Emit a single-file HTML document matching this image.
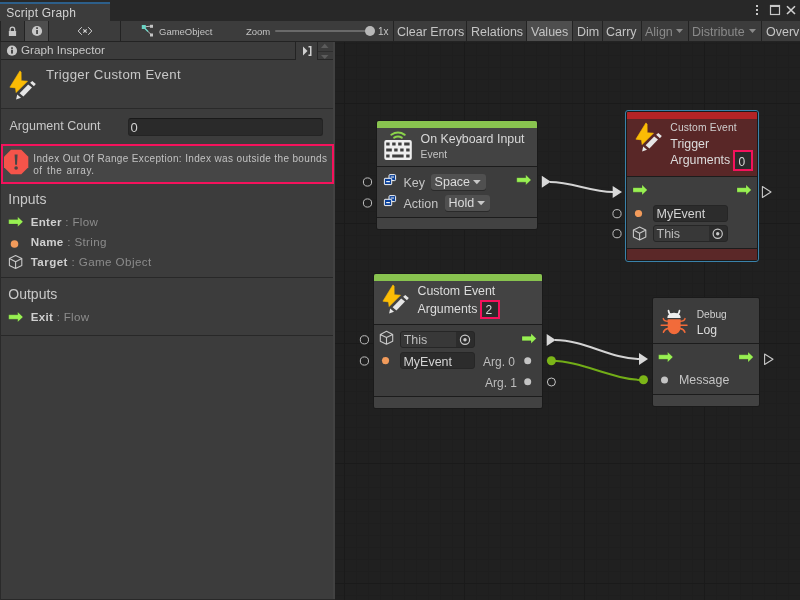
<!DOCTYPE html>
<html><head><meta charset="utf-8">
<style>
*{box-sizing:border-box}
html,body{margin:0;padding:0}
body{width:800px;height:600px;overflow:hidden;position:relative;will-change:transform;background:#202020;font-family:"Liberation Sans",sans-serif;color:#c4c4c4}
.a{position:absolute}
.t{position:absolute;white-space:nowrap;line-height:1}
svg{position:absolute;overflow:visible}
#grid{position:absolute;left:335px;top:42px;width:465px;height:558px;
 background-color:#202020;
 background-image:
  linear-gradient(to right,#1a1a1a 1px,transparent 1px),
  linear-gradient(to bottom,#1a1a1a 1px,transparent 1px),
  linear-gradient(to right,#1e1e1e 1px,transparent 1px),
  linear-gradient(to bottom,#1e1e1e 1px,transparent 1px);
 background-size:120px 120px,120px 120px,12px 12px,12px 12px;
 background-position:9px 61px,9px 61px,9px 61px,9px 61px}
.tb{position:absolute;top:21px;height:20px;background:#3c3c3c;border-right:1px solid #232323}
.tbt{position:absolute;top:26.2px;font-size:12.5px;color:#c4c4c4;white-space:nowrap;line-height:1}
.sep{position:absolute;background:#232323}
</style></head><body>
<div id="grid"></div>

<!-- tab strip -->
<div class="a" style="left:0;top:0;width:800px;height:21px;background:#282828"></div>
<div class="a" style="left:0;top:2px;width:110px;height:19px;background:#3c3c3c;border-top:2px solid #2d5f8a"></div>
<div class="t" style="left:6.3px;top:7px;font-size:12px;letter-spacing:0.2px;color:#d2d2d2">Script Graph</div>
<!-- window icons -->
<svg style="left:750px;top:0" width="50" height="21">
 <rect x="6" y="5" width="2" height="2" fill="#c8c8c8"/><rect x="6" y="9" width="2" height="2" fill="#c8c8c8"/><rect x="6" y="13" width="2" height="2" fill="#c8c8c8"/>
 <rect x="20.5" y="5.5" width="9" height="9" fill="none" stroke="#c8c8c8" stroke-width="1.2"/><rect x="20" y="5" width="10" height="2" fill="#c8c8c8"/>
 <path d="M37 6.2 L45 14 M45 6.2 L37 14" stroke="#d0d0d0" stroke-width="1.6"/>
</svg>

<!-- toolbar -->
<div class="a" style="left:0;top:21px;width:800px;height:21px;background:#3c3c3c;border-bottom:1px solid #232323"></div>
<div class="sep" style="left:0;top:21px;width:1px;height:20px"></div>
<div class="sep" style="left:24px;top:21px;width:1px;height:20px"></div>
<div class="a" style="left:25px;top:21px;width:23px;height:20px;background:#4e4e4e"></div>
<div class="sep" style="left:48px;top:21px;width:1px;height:20px"></div>
<div class="sep" style="left:120px;top:21px;width:1px;height:20px"></div>
<div class="sep" style="left:393px;top:21px;width:1px;height:20px"></div>
<div class="sep" style="left:466px;top:21px;width:1px;height:20px"></div>
<div class="sep" style="left:526px;top:21px;width:1px;height:20px"></div>
<div class="a" style="left:527px;top:21px;width:45px;height:20px;background:#4e4e4e"></div>
<div class="sep" style="left:572px;top:21px;width:1px;height:20px"></div>
<div class="sep" style="left:602px;top:21px;width:1px;height:20px"></div>
<div class="sep" style="left:641px;top:21px;width:1px;height:20px"></div>
<div class="sep" style="left:688px;top:21px;width:1px;height:20px"></div>
<div class="sep" style="left:761px;top:21px;width:1px;height:20px"></div>

<!-- lock -->
<svg style="left:0;top:21px" width="120" height="20">
 <path d="M10.1 10.4 V8.5 A2.3 2.3 0 0 1 14.7 8.5 V10.4" fill="none" stroke="#c8c8c8" stroke-width="1.3"/>
 <rect x="8.85" y="10.1" width="7.25" height="5" rx="0.4" fill="#c8c8c8"/>
 <circle cx="37" cy="10" r="5.1" fill="#c8c8c8"/>
 <rect x="36.1" y="9" width="1.9" height="4" fill="#4e4e4e"/><rect x="36.1" y="6.3" width="1.9" height="1.7" fill="#4e4e4e"/>
 <path d="M81.8 6.2 L78.2 10 L81.8 13.8 M88.2 6.2 L91.8 10 L88.2 13.8" fill="none" stroke="#d0d0d0" stroke-width="1"/>
 <path d="M83.3 8.3 L86.7 11.7 M86.7 8.3 L83.3 11.7" stroke="#d0d0d0" stroke-width="1.2"/>
</svg>
<!-- GameObject icon -->
<svg style="left:140px;top:21px" width="16" height="20">
 <path d="M3.5 6 L11.5 5 M3.5 6 L11.5 14" stroke="#bdbdbd" stroke-width="1"/>
 <path d="M3.5 6 L8 10.5" stroke="#6ad4c4" stroke-width="1.3"/>
 <rect x="1.8" y="4" width="4" height="4" fill="#6ad4c4"/>
 <rect x="10" y="3.8" width="3" height="3" fill="#c4c4c4"/>
 <rect x="10" y="12.5" width="3" height="3" fill="#c4c4c4"/>
</svg>
<div class="t" style="left:159px;top:27px;font-size:9.5px;color:#c4c4c4">GameObject</div>
<div class="t" style="left:246px;top:27px;font-size:9.5px;color:#c4c4c4">Zoom</div>
<div class="a" style="left:275px;top:30px;width:95px;height:2px;background:#6a6a6a;border-radius:1px"></div>
<div class="a" style="left:365px;top:26px;width:10px;height:10px;background:#b8b8b8;border-radius:50%"></div>
<div class="t" style="left:378px;top:27px;font-size:10px;color:#c4c4c4">1x</div>

<div class="tbt" style="left:397px">Clear Errors</div>
<div class="tbt" style="left:471px">Relations</div>
<div class="tbt" style="left:531px">Values</div>
<div class="tbt" style="left:577px">Dim</div>
<div class="tbt" style="left:606px">Carry</div>
<div class="tbt" style="left:645px;color:#8a8a8a">Align</div>
<svg style="left:675px;top:21px" width="10" height="20"><path d="M1 8 L8 8 L4.5 12 Z" fill="#8a8a8a"/></svg>
<div class="tbt" style="left:692px;color:#8a8a8a">Distribute</div>
<svg style="left:748px;top:21px" width="10" height="20"><path d="M1 8 L8 8 L4.5 12 Z" fill="#8a8a8a"/></svg>
<div class="tbt" style="left:766px">Overview</div>

<!-- inspector panel -->
<div class="a" style="left:0;top:42px;width:335px;height:558px;background:#3c3c3c"></div>
<div class="a" style="left:333px;top:42px;width:2px;height:558px;background:#424242"></div>
<div class="a" style="left:0;top:599px;width:335px;height:1px;background:#282828"></div>
<!-- header -->
<div class="a" style="left:0;top:42px;width:296px;height:18px;border-right:1px solid #232323;border-bottom:1px solid #232323;background:#3c3c3c"></div>
<svg style="left:8px;top:44px" width="12" height="14">
 <circle cx="4" cy="6.7" r="5.1" fill="#c8c8c8"/>
 <rect x="3.1" y="5.7" width="1.8" height="3.9" fill="#3c3c3c"/><rect x="3.1" y="3.3" width="1.8" height="1.6" fill="#3c3c3c"/>
</svg>
<div class="t" style="left:21px;top:44.1px;font-size:11.7px;color:#c8c8c8">Graph Inspector</div>
<svg style="left:300px;top:44px" width="16" height="14">
 <path d="M3 2.5 L7.5 7 L3 11.5 Z" fill="#d0d0d0"/>
 <path d="M8.5 2 H11.5 V12 H8.5 V10.6 H10 V3.4 H8.5 Z" fill="#d0d0d0"/>
</svg>
<div class="a" style="left:317px;top:42px;width:16px;height:18px;background:#3c3c3c;border-left:1px solid #262626;border-bottom:1px solid #262626"></div>
<div class="a" style="left:318px;top:50.5px;width:15px;height:1px;background:#2e2e2e"></div>
<svg style="left:317px;top:42px" width="16" height="18">
 <path d="M4 6 L7.75 1.75 L11.5 6 Z" fill="#5c5c5c"/>
 <path d="M4 13 L11.5 13 L7.75 17 Z" fill="#5c5c5c"/>
</svg>


<!-- inspector title -->

<svg style="left:0;top:0" width="40" height="110">
 <path d="M19.9 70.9 L9.9 87.2 L15.5 87.9 L16.1 92.6 L27.5 81.2 L21.2 80.7 L21.1 72 Z" fill="#fbbc05" stroke="#fbbc05" stroke-width="0.6" stroke-linejoin="round"/>
 <path d="M16.1 99.6 L17.2 94.4 L21 97.8 Z" fill="#e6e6e6"/>
 <path d="M19.6 93.2 L23.4 96.4 L32 87.5 L28.2 84.4 Z" fill="#e6e6e6"/>
 <path d="M30.1 82.8 L32.3 80.9 L35.8 84.1 L33.9 86.3 Z" fill="#e6e6e6"/>
</svg>
<div class="t" style="left:46px;top:68px;font-size:13.2px;letter-spacing:0.36px;color:#c8c8c8">Trigger Custom Event</div>
<div class="a" style="left:0;top:108px;width:333px;height:1px;background:#2a2a2a"></div>
<div class="t" style="left:9.5px;top:119.9px;font-size:12.5px;color:#c8c8c8">Argument Count</div>
<div class="a" style="left:128px;top:118px;width:195px;height:18px;background:#2a2a2a;border:1px solid #242424;border-top-color:#191919;border-radius:3px"></div>
<div class="t" style="left:130.6px;top:121px;font-size:13px;color:#d2d2d2">0</div>
<!-- error box -->
<div class="a" style="left:1px;top:144px;width:333px;height:40px;border:2px solid #f5125c;background:#464646"></div>
<svg style="left:0;top:0" width="40" height="190">
 <path d="M11 149.8 H21.3 L28.3 156.8 V167.2 L21.3 174.2 H11 L4 167.2 V156.8 Z" fill="#f5544a"/>
 <path d="M14.6 154.5 H17.6 L17 164.8 H15.2 Z" fill="#464646"/>
 <circle cx="16.1" cy="168" r="1.8" fill="#464646"/>
</svg>
<div class="t" style="left:33.3px;top:153.7px;font-size:10px;letter-spacing:0.355px;color:#c2c2c2">Index Out Of Range Exception: Index was outside the bounds</div>
<div class="t" style="left:33.3px;top:165.7px;font-size:10px;letter-spacing:0.5px;word-spacing:1px;color:#c2c2c2">of the array.</div>
<!-- inputs -->
<div class="t" style="left:8.3px;top:191.8px;font-size:14px;color:#c8c8c8">Inputs</div>
<svg style="left:0;top:0" width="30" height="330">
 <path d="M8.70 219.55 H17.70 V216.75 L23.00 221.80 L17.70 226.85 V224.05 H8.70 Z" fill="#98f052" stroke="#2a2a2a" stroke-opacity="0.35" stroke-width="0.6"/>
 <circle cx="14.5" cy="244" r="3.8" fill="#f29b5b"/>
 <path d="M15.6 255.5 L21.8 258.6 V265.4 L15.6 268.5 L9.4 265.4 V258.6 Z M9.4 258.6 L15.6 261.8 L21.8 258.6 M15.6 261.8 V268.5" fill="none" stroke="#c8c8c8" stroke-width="1.1" stroke-linejoin="round"/>
 <path d="M8.70 314.75 H17.70 V311.95 L23.00 317.00 L17.70 322.05 V319.25 H8.70 Z" fill="#98f052" stroke="#2a2a2a" stroke-opacity="0.35" stroke-width="0.6"/>
</svg>
<div class="t" style="left:30.7px;top:216.2px;font-size:11.6px;letter-spacing:0.3px;color:#8c8c8c"><b style="color:#cfcfcf">Enter</b> : Flow</div>
<div class="t" style="left:30.7px;top:236px;font-size:11.6px;letter-spacing:0.35px;color:#8c8c8c"><b style="color:#cfcfcf">Name</b> : String</div>
<div class="t" style="left:30.7px;top:256px;font-size:11.6px;letter-spacing:0.42px;color:#8c8c8c"><b style="color:#cfcfcf">Target</b> : Game Object</div>
<div class="a" style="left:1px;top:276.5px;width:332px;height:1px;background:#282828"></div>
<div class="t" style="left:8.3px;top:286.8px;font-size:14px;color:#c8c8c8">Outputs</div>
<div class="t" style="left:30.7px;top:311.2px;font-size:11.6px;letter-spacing:0.3px;color:#8c8c8c"><b style="color:#cfcfcf">Exit</b> : Flow</div>
<div class="a" style="left:1px;top:334.5px;width:332px;height:1px;background:#282828"></div>
<div class="a" style="left:0;top:42px;width:1px;height:558px;background:#2a2a2a"></div>


<!-- ===== connections ===== -->
<svg style="left:0;top:0" width="800" height="600">
 <path d="M550 182 C572 182 591 192 613 192" fill="none" stroke="#d4d4d4" stroke-width="2"/>
 <path d="M541.8 175.8 L550.8 181.8 L541.8 187.8 Z" fill="#d8d8d8"/>
 <path d="M612.7 186 L622 192 L612.7 198 Z" fill="#d8d8d8"/>
 <path d="M555 340.1 C585 340.1 610 359 640 359" fill="none" stroke="#d4d4d4" stroke-width="2"/>
 <path d="M546.7 334.1 L555.8 340.1 L546.7 346.1 Z" fill="#d8d8d8"/>
 <path d="M639 353 L648 359 L639 365 Z" fill="#d8d8d8"/>
 <path d="M551.4 360.8 C582 360.8 612 380 643.3 380" fill="none" stroke="#72ad17" stroke-width="2"/>
 <circle cx="551.4" cy="360.8" r="4.5" fill="#7cb518"/>
 <circle cx="643.5" cy="379.8" r="4.5" fill="#7cb518"/>
 <circle cx="551.4" cy="382" r="4" fill="none" stroke="#c4c4c4" stroke-width="1"/>
</svg>

<!-- ===== node 1: On Keyboard Input ===== -->
<div class="a" style="left:376px;top:120px;width:162px;height:110px;background:#1a1a1a;border-radius:3px"></div>
<div class="a" style="left:377px;top:121px;width:160px;height:108px;background:#3d3d3d;border-radius:2px;overflow:hidden">
 <div class="a" style="left:0;top:0;width:160px;height:45px;background:#434343"></div>
 <div class="a" style="left:0;top:0;width:160px;height:7px;background:#88c34f"></div>
 <div class="a" style="left:0;top:45px;width:160px;height:1px;background:#1c1c1c"></div>
 <div class="a" style="left:0;top:96px;width:160px;height:1px;background:#1c1c1c"></div>
 <div class="a" style="left:0;top:97px;width:160px;height:11px;background:#424242"></div>
</div>
<svg style="left:0;top:0" width="800" height="600">
 <rect x="384.3" y="140" width="27.5" height="20" rx="2" fill="#efefef"/>
 <g fill="#3d3d3d">
  <rect x="386.2" y="142.5" width="3.4" height="3"/><rect x="392.2" y="142.5" width="3.4" height="3"/><rect x="398.2" y="142.5" width="3.4" height="3"/><rect x="404.2" y="142.5" width="5.4" height="3"/>
  <rect x="386.2" y="148.5" width="5.6" height="3"/><rect x="394.2" y="148.5" width="3.4" height="3"/><rect x="400.2" y="148.5" width="3.4" height="3"/><rect x="406.2" y="148.5" width="3.4" height="3"/>
  <rect x="386.2" y="154.5" width="3.4" height="3"/><rect x="392.2" y="154.5" width="11.4" height="3"/><rect x="406.2" y="154.5" width="3.4" height="3"/>
 </g>
 <path d="M391.3 134.8 Q398 130.2 404.8 134.8" fill="none" stroke="#8bd44a" stroke-width="2" stroke-linecap="round"/>
 <path d="M394.2 137.7 Q398 135.2 401.8 137.7" fill="none" stroke="#8bd44a" stroke-width="2" stroke-linecap="round"/>
 <circle cx="367.5" cy="182" r="4.1" fill="none" stroke="#c0c0c0" stroke-width="1"/>
 <circle cx="367.5" cy="203" r="4.1" fill="none" stroke="#c0c0c0" stroke-width="1"/>
 <g id="enumico">
  <rect x="389" y="174.6" width="6.6" height="6" rx="1" fill="#0a4099" stroke="#f2f2f2" stroke-width="1"/>
  <rect x="390.8" y="176.5" width="3.2" height="1" fill="#f2f2f2"/>
  <rect x="384.4" y="178.3" width="7.3" height="6.3" rx="0.6" fill="#0a4099" stroke="#f2f2f2" stroke-width="1"/>
  <rect x="386.2" y="181" width="3.7" height="1.2" fill="#f2f2f2"/>
 </g>
 <use href="#enumico" y="21"/>
 <path d="M516.75 177.65 H525.75 V174.85 L531.05 179.90 L525.75 184.95 V182.15 H516.75 Z" fill="#98f052" stroke="#2a2a2a" stroke-opacity="0.35" stroke-width="0.6"/>
</svg>
<div class="t" style="left:420.5px;top:133.2px;font-size:12.4px;color:#d8d8d8">On Keyboard Input</div>
<div class="t" style="left:420.5px;top:149.8px;font-size:10.3px;letter-spacing:0.1px;color:#c4c4c4">Event</div>
<div class="t" style="left:403.5px;top:177.30px;font-size:12.5px;color:#c4c4c4">Key</div>
<div class="t" style="left:403.5px;top:197.90px;font-size:12.5px;color:#c4c4c4">Action</div>
<div class="a" style="left:431px;top:174px;width:55px;height:16px;background:#505050;border-radius:3px;box-shadow:0 1px 0 #2a2a2a"></div>
<div class="t" style="left:434.6px;top:176.40px;font-size:12.5px;color:#dcdcdc">Space</div>
<svg style="left:0;top:0" width="800" height="600"><path d="M473 180 H480.7 L476.85 184.2 Z" fill="#c8c8c8"/><path d="M477.2 201 H485 L481.1 205.2 Z" fill="#c8c8c8"/></svg>
<div class="a" style="left:445px;top:195px;width:45px;height:16px;background:#505050;border-radius:3px;box-shadow:0 1px 0 #2a2a2a"></div>
<div class="t" style="left:448.6px;top:197.00px;font-size:12.5px;color:#dcdcdc">Hold</div>
<svg style="left:0;top:0" width="800" height="600"><path d="M477.2 201 H485 L481.1 205.2 Z" fill="#c8c8c8"/></svg>

<!-- ===== node 2: Trigger Custom Event ===== -->
<div class="a" style="left:625px;top:110px;width:134px;height:152px;border:1px solid #3a82aa;border-radius:3px;background:#1a1a1a"></div>
<div class="a" style="left:627px;top:112px;width:130px;height:148px;background:#3e3e3e;overflow:hidden;border-radius:1px">
 <div class="a" style="left:0;top:0;width:130px;height:7px;background:#b42426"></div>
 <div class="a" style="left:0;top:7px;width:130px;height:57px;background:#592727"></div>
 <div class="a" style="left:0;top:64px;width:130px;height:1px;background:#1c1c1c"></div>
 <div class="a" style="left:0;top:136px;width:130px;height:1px;background:#1c1c1c"></div>
 <div class="a" style="left:0;top:137px;width:130px;height:11px;background:#5b2828"></div>
</div>
<svg style="left:626px;top:52px" width="40" height="110">
 <path d="M19.9 70.9 L9.9 87.2 L15.5 87.9 L16.1 92.6 L27.5 81.2 L21.2 80.7 L21.1 72 Z" fill="#fbbc05" stroke="#fbbc05" stroke-width="0.6" stroke-linejoin="round"/>
 <path d="M16.1 99.6 L17.2 94.4 L21 97.8 Z" fill="#e6e6e6"/>
 <path d="M19.6 93.2 L23.4 96.4 L32 87.5 L28.2 84.4 Z" fill="#e6e6e6"/>
 <path d="M30.1 82.8 L32.3 80.9 L35.8 84.1 L33.9 86.3 Z" fill="#e6e6e6"/>
</svg>
<div class="t" style="left:670.3px;top:123.20px;font-size:10.3px;letter-spacing:0.15px;color:#cfcfcf">Custom Event</div>
<div class="t" style="left:670.3px;top:137.5px;font-size:12.4px;color:#dcdcdc">Trigger</div>
<div class="t" style="left:670.3px;top:154.1px;font-size:12.4px;color:#dcdcdc">Arguments</div>
<div class="a" style="left:733px;top:150.2px;width:20px;height:21.3px;border:2px solid #f5125c;background:#2b2b2b"></div>
<div class="t" style="left:738.5px;top:156px;font-size:12px;color:#d8d8d8">0</div>
<svg style="left:0;top:0" width="800" height="600">
 <path d="M633.00 187.65 H642.00 V184.85 L647.30 189.90 L642.00 194.95 V192.15 H633.00 Z" fill="#98f052" stroke="#2a2a2a" stroke-opacity="0.35" stroke-width="0.6"/>
 <path d="M737.00 187.65 H746.00 V184.85 L751.30 189.90 L746.00 194.95 V192.15 H737.00 Z" fill="#98f052" stroke="#2a2a2a" stroke-opacity="0.35" stroke-width="0.6"/>
 <path d="M762.4 186.5 L771 192 L762.4 197.5 Z" fill="none" stroke="#c8c8c8" stroke-width="1.1" stroke-linejoin="round"/>
 <circle cx="617" cy="213.7" r="4.1" fill="none" stroke="#c0c0c0" stroke-width="1"/>
 <circle cx="617" cy="233.7" r="4.1" fill="none" stroke="#c0c0c0" stroke-width="1"/>
 <circle cx="638.5" cy="213.5" r="3.6" fill="#f29b5b"/>
 <path d="M639.6 227 L645.8 230.1 V236.9 L639.6 240 L633.4 236.9 V230.1 Z M633.4 230.1 L639.6 233.3 L645.8 230.1 M639.6 233.3 V240" fill="none" stroke="#c8c8c8" stroke-width="1.1" stroke-linejoin="round"/>
</svg>
<div class="a" style="left:653px;top:204.6px;width:74.5px;height:17px;background:#2c2c2c;border:1px solid #262626;border-radius:3px"></div>
<div class="t" style="left:656.5px;top:208.00px;font-size:12.5px;color:#d4d4d4">MyEvent</div>
<div class="a" style="left:653px;top:225.4px;width:74.5px;height:17px;background:#2c2c2c;border:1px solid #262626;border-radius:3px"></div>
<div class="a" style="left:654px;top:226.4px;width:55px;height:15px;background:#383838;border-radius:2px 0 0 2px"></div>
<div class="t" style="left:656.5px;top:228.40px;font-size:12.5px;color:#bdbdbd">This</div>
<svg style="left:0;top:0" width="800" height="600"><circle cx="717.7" cy="233.8" r="4.6" fill="none" stroke="#c8c8c8" stroke-width="1.2"/><circle cx="717.7" cy="233.8" r="1.7" fill="#c8c8c8"/></svg>

<!-- ===== node 3: Custom Event ===== -->
<div class="a" style="left:373px;top:273px;width:170px;height:136px;background:#1a1a1a;border-radius:3px"></div>
<div class="a" style="left:374px;top:274px;width:168px;height:134px;background:#3d3d3d;overflow:hidden;border-radius:2px">
 <div class="a" style="left:0;top:0;width:168px;height:50px;background:#434343"></div>
 <div class="a" style="left:0;top:0;width:168px;height:7px;background:#88c34f"></div>
 <div class="a" style="left:0;top:50px;width:168px;height:1px;background:#1c1c1c"></div>
 <div class="a" style="left:0;top:122px;width:168px;height:1px;background:#1c1c1c"></div>
 <div class="a" style="left:0;top:123px;width:168px;height:11px;background:#424242"></div>
</div>
<svg style="left:373px;top:214px" width="40" height="110">
 <path d="M19.9 70.9 L9.9 87.2 L15.5 87.9 L16.1 92.6 L27.5 81.2 L21.2 80.7 L21.1 72 Z" fill="#fbbc05" stroke="#fbbc05" stroke-width="0.6" stroke-linejoin="round"/>
 <path d="M16.1 99.6 L17.2 94.4 L21 97.8 Z" fill="#e6e6e6"/>
 <path d="M19.6 93.2 L23.4 96.4 L32 87.5 L28.2 84.4 Z" fill="#e6e6e6"/>
 <path d="M30.1 82.8 L32.3 80.9 L35.8 84.1 L33.9 86.3 Z" fill="#e6e6e6"/>
</svg>
<div class="t" style="left:417.5px;top:285.20px;font-size:12.4px;color:#dcdcdc">Custom Event</div>
<div class="t" style="left:417.5px;top:303px;font-size:12.4px;color:#dcdcdc">Arguments</div>
<div class="a" style="left:480.4px;top:300.4px;width:19.6px;height:18.4px;border:2px solid #f5125c;background:#2b2b2b"></div>
<div class="t" style="left:485.5px;top:303.5px;font-size:12px;color:#d8d8d8">2</div>
<svg style="left:0;top:0" width="800" height="600">
 <circle cx="364.4" cy="339.8" r="4.1" fill="none" stroke="#c0c0c0" stroke-width="1"/>
 <circle cx="364.4" cy="361" r="4.1" fill="none" stroke="#c0c0c0" stroke-width="1"/>
 <circle cx="385.5" cy="360.6" r="3.6" fill="#f29b5b"/>
 <path d="M386.5 331.3 L392.7 334.4 V341.2 L386.5 344.3 L380.3 341.2 V334.4 Z M380.3 334.4 L386.5 337.6 L392.7 334.4 M386.5 337.6 V344.3" fill="none" stroke="#c8c8c8" stroke-width="1.1" stroke-linejoin="round"/>
 <path d="M522.00 336.25 H531.00 V333.45 L536.30 338.50 L531.00 343.55 V340.75 H522.00 Z" fill="#98f052" stroke="#2a2a2a" stroke-opacity="0.35" stroke-width="0.6"/>
 <circle cx="527.7" cy="360.8" r="3.5" fill="#c4c4c4"/>
 <circle cx="527.7" cy="381.8" r="3.5" fill="#c4c4c4"/>
</svg>
<div class="a" style="left:400.2px;top:331.4px;width:74.6px;height:17px;background:#2c2c2c;border:1px solid #262626;border-radius:3px"></div>
<div class="a" style="left:401.2px;top:332.4px;width:55px;height:15px;background:#383838;border-radius:2px 0 0 2px"></div>
<div class="t" style="left:403.7px;top:334.10px;font-size:12.5px;color:#bdbdbd">This</div>
<svg style="left:0;top:0" width="800" height="600"><circle cx="465" cy="339.8" r="4.6" fill="none" stroke="#c8c8c8" stroke-width="1.2"/><circle cx="465" cy="339.8" r="1.7" fill="#c8c8c8"/></svg>
<div class="a" style="left:400.2px;top:352.4px;width:74.6px;height:17px;background:#2c2c2c;border:1px solid #262626;border-radius:3px"></div>
<div class="t" style="left:403.4px;top:356.40px;font-size:12.5px;color:#d4d4d4">MyEvent</div>
<div class="t" style="left:483px;top:355.70px;font-size:12px;color:#bdbdbd">Arg. 0</div>
<div class="t" style="left:485px;top:376.70px;font-size:12px;color:#bdbdbd">Arg. 1</div>

<!-- ===== node 4: Debug Log ===== -->
<div class="a" style="left:652px;top:297px;width:108px;height:110px;background:#1a1a1a;border-radius:3px"></div>
<div class="a" style="left:653px;top:298px;width:106px;height:108px;background:#3d3d3d;overflow:hidden;border-radius:2px">
 <div class="a" style="left:0;top:0;width:106px;height:45px;background:#3c3c3c"></div>
 <div class="a" style="left:0;top:45px;width:106px;height:1px;background:#1c1c1c"></div>
 <div class="a" style="left:0;top:96px;width:106px;height:1px;background:#1c1c1c"></div>
 <div class="a" style="left:0;top:97px;width:106px;height:11px;background:#424242"></div>
</div>
<svg style="left:0;top:0" width="800" height="600">
 <path d="M667.3 317.9 Q667.4 312.9 674 312.7 Q680.6 312.9 680.7 317.9 Z" fill="#eeeeee"/>
 <path d="M668.5 310.6 Q668.7 313.6 671.2 314.6 M679.5 310.6 Q679.3 313.6 676.8 314.6" fill="none" stroke="#eeeeee" stroke-width="1.7" stroke-linecap="round"/>
 <path d="M667.7 319.3 H680.6 V327.6 A6.45 6.6 0 0 1 667.7 327.6 Z" fill="#f26b3a"/>
 <path d="M668 321.3 Q664 321.2 663.3 318.6 M668 325.3 H661.2 M668 328.6 Q664.2 329.4 663.4 332.3 M680.3 321.3 Q684.3 321.2 685 318.6 M680.3 325.3 H687 M680.3 328.6 Q684.1 329.4 684.9 332.3" fill="none" stroke="#f26b3a" stroke-width="1.5" stroke-linecap="round"/>
 <path d="M658.60 354.85 H667.60 V352.05 L672.90 357.10 L667.60 362.15 V359.35 H658.60 Z" fill="#98f052" stroke="#2a2a2a" stroke-opacity="0.35" stroke-width="0.6"/>
 <path d="M739.00 354.85 H748.00 V352.05 L753.30 357.10 L748.00 362.15 V359.35 H739.00 Z" fill="#98f052" stroke="#2a2a2a" stroke-opacity="0.35" stroke-width="0.6"/>
 <path d="M764.6 354 L773 359.25 L764.6 364.5 Z" fill="none" stroke="#c8c8c8" stroke-width="1.1" stroke-linejoin="round"/>
 <circle cx="664.5" cy="380" r="3.5" fill="#c4c4c4"/>
</svg>
<div class="t" style="left:696.7px;top:309.60px;font-size:10.2px;color:#d0d0d0">Debug</div>
<div class="t" style="left:696.7px;top:324.00px;font-size:12.2px;color:#dcdcdc">Log</div>
<div class="t" style="left:679px;top:374.3px;font-size:12.4px;color:#c4c4c4">Message</div>

</body></html>
